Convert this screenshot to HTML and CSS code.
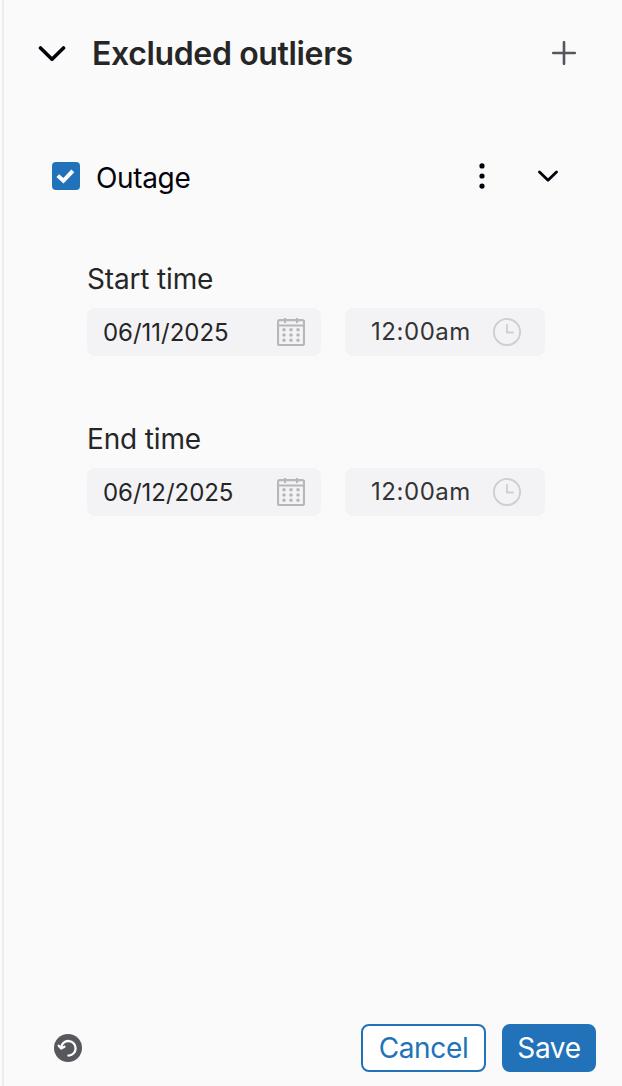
FILE: index.html
```html
<!DOCTYPE html>
<html lang="en">
<head>
  <meta charset="UTF-8" />
  <meta name="viewport" content="width=device-width, initial-scale=1.0"/>
  <title>Excluded outliers</title>
  <link rel="stylesheet" href="styles.css">
</head>
<body>

  <div class="panel">
    <div class="panel-header">
      <svg class="header-chevron" width="28" height="18" viewBox="0 0 28 18"><path d="M2.5 4 L14 15.2 L25.5 4"/></svg>
      <h2>Excluded outliers</h2>
      <svg class="add-icon" width="24" height="24" viewBox="0 0 24 24"><path d="M12 1.2 V22.8 M1.2 12 H22.8"/></svg>
    </div>

    <!-- Outlier entry -->
    <div class="outlier-row">
      <span class="checkbox">
        <svg width="28" height="28" viewBox="0 0 28 28"><path d="M5.8 13.6 L11.4 18.8 L20.8 8.8"/></svg>
      </span>
      <span class="outlier-name">Outage</span>
      <svg class="more-icon" width="8" height="28" viewBox="0 0 8 28">
        <circle cx="4" cy="3.9" r="2.6"/><circle cx="4" cy="14" r="2.6"/><circle cx="4" cy="24.1" r="2.6"/>
      </svg>
      <svg class="row-chevron" width="20" height="14" viewBox="0 0 20 14"><path d="M1.5 3 L10 11.3 L18.5 3"/></svg>
    </div>

    <div class="form-group">
      <label>Start time</label>
      <div class="form-row">
        <div class="field date-field">
          <span>06/11/2025</span>
          <svg width="28" height="28" viewBox="0 0 28 28">
            <path d="M2.5 2.2 H25.5 Q27 2.2 27 3.7 V25.5 Q27 27 25.5 27 H2.5 Q1 27 1 25.5 V3.7 Q1 2.2 2.5 2.2 Z M1 7.5 H27 M8 0 V5 M20 0 V5"/>
            <path class="dots" d="M7 11.8 h0 M14 11.8 h0 M21 11.8 h0 M7 17 h0 M14 17 h0 M21 17 h0 M7 22.2 h0 M14 22.2 h0 M21 22.2 h0"/>
          </svg>
        </div>
        <div class="field time-field">
          <span>12:00am</span>
          <svg width="28" height="28" viewBox="0 0 28 28"><circle cx="14" cy="14" r="13.1"/><path d="M14 7 V14.5 H20"/></svg>
        </div>
      </div>
    </div>

    <div class="form-group">
      <label>End time</label>
      <div class="form-row">
        <div class="field date-field">
          <span>06/12/2025</span>
          <svg width="28" height="28" viewBox="0 0 28 28">
            <path d="M2.5 2.2 H25.5 Q27 2.2 27 3.7 V25.5 Q27 27 25.5 27 H2.5 Q1 27 1 25.5 V3.7 Q1 2.2 2.5 2.2 Z M1 7.5 H27 M8 0 V5 M20 0 V5"/>
            <path class="dots" d="M7 11.8 h0 M14 11.8 h0 M21 11.8 h0 M7 17 h0 M14 17 h0 M21 17 h0 M7 22.2 h0 M14 22.2 h0 M21 22.2 h0"/>
          </svg>
        </div>
        <div class="field time-field">
          <span>12:00am</span>
          <svg width="28" height="28" viewBox="0 0 28 28"><circle cx="14" cy="14" r="13.1"/><path d="M14 7 V14.5 H20"/></svg>
        </div>
      </div>
    </div>

    <div class="panel-footer">
      <svg class="reset-icon" width="28" height="28" viewBox="0 0 28 28">
        <circle cx="14" cy="14" r="14"/>
        <path d="M7.1 13.4 A7.3 7.3 0 1 1 14.4 21.6 M4.7 11.7 L7.2 14.6 L10.4 12.7"/>
      </svg>
      <button class="cancel-btn">Cancel</button>
      <button class="save-btn">Save</button>
    </div>
  </div>

</body>
</html>
```
FILE: styles.css
```css
* { margin: 0; padding: 0; box-sizing: border-box; font-family: Inter, sans-serif; }
body { background-color: #fafafa; padding-left: 2px; }
svg { display: block; flex: none; fill: none; stroke-linecap: round; stroke-linejoin: round; }
.panel {
  height: 1086px;
  border-left: 2px solid #ececec;
  display: flex;
  flex-direction: column;
}
.panel-header {
  height: 106px;
  padding: 0 46px 0 34px;
  display: flex;
  align-items: center;
}
.header-chevron { stroke: #03030c; stroke-width: 3.6; }
.panel-header h2 {
  flex: 1;
  margin-left: 26px;
  padding-top: 2px;
  font-size: 32px;
  font-weight: 600;
  letter-spacing: -0.36px;
  line-height: 40px;
  color: #262626;
}
.add-icon { stroke: #55555d; stroke-width: 2.6; }
.outlier-row {
  height: 140px;
  padding: 0 64px 0 48px;
  display: flex;
  align-items: center;
}
.checkbox { background-color: #2172b8; border-radius: 4px; }
.checkbox svg { stroke: #fff; stroke-width: 4; stroke-linecap: butt; stroke-linejoin: miter; }
.outlier-name {
  flex: 1;
  margin-left: 16px;
  padding-top: 3px;
  font-size: 28px;
  letter-spacing: -0.35px;
  line-height: 34px;
  color: #03030c;
}
.more-icon { fill: #03030c; margin-right: 52px; }
.row-chevron { stroke: #03030c; stroke-width: 2.8; }
.form-group { height: 160px; padding: 15px 0 0 83px; }
label {
  display: block;
  height: 47px;
  font-size: 28px;
  letter-spacing: -0.15px;
  line-height: 36px;
  color: #262626;
}
.form-row { display: flex; gap: 24px; }
.field {
  height: 48px;
  display: flex;
  align-items: center;
  justify-content: space-between;
  background-color: #f3f3f6;
  border-radius: 8px;
}
.field span { font-size: 24px; line-height: 32px; }
.date-field { width: 234px; padding: 0 16px; color: #262626; }
.date-field span { padding-top: 2px; letter-spacing: -0.03px; }
.date-field svg { stroke: #b7b7b9; stroke-width: 2.2; stroke-linecap: butt; }
.date-field .dots { stroke-width: 3.6; stroke-linecap: round; }
.time-field { width: 200px; padding: 0 24px 0 26px; color: #333; }
.time-field span { letter-spacing: 0.55px; }
.time-field svg { stroke: #cfcfd1; stroke-width: 1.9; }
.panel-footer {
  margin-top: auto;
  padding: 0 26px 14px 50px;
  display: flex;
  align-items: center;
}
.reset-icon { margin-right: auto; }
.reset-icon circle { fill: #57575e; }
.reset-icon path { stroke: #fff; stroke-width: 2.3; }
.cancel-btn, .save-btn {
  height: 48px;
  font-size: 28px;
  letter-spacing: -0.35px;
  border: 2px solid #2172b8;
  border-radius: 8px;
}
.cancel-btn { width: 125px; margin-right: 16px; background-color: #fff; color: #2172b8; }
.save-btn { width: 94px; background-color: #2172b8; color: #fff; }
```
